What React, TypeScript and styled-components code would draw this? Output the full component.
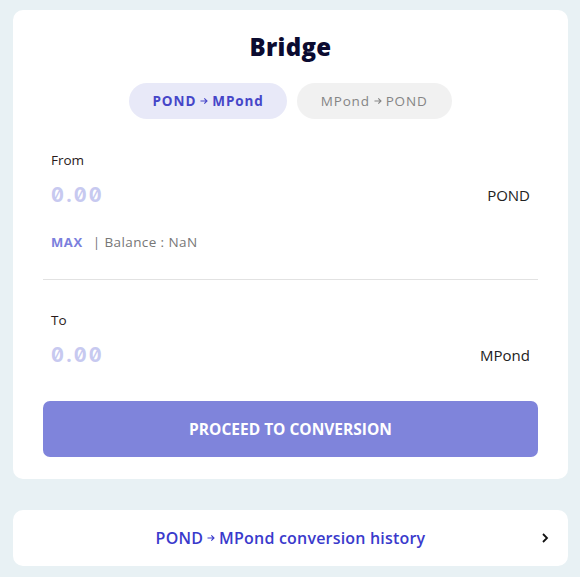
import styled, { createGlobalStyle } from "styled-components";

const GlobalStyle = createGlobalStyle`
  html, body {
    margin: 0;
    padding: 0;
    background: #e8f1f4;
    font-family: "Open Sans", "Noto Sans", sans-serif;
  }
  * { box-sizing: border-box; }
`;

const Page = styled.div`
  padding: 10px 12px 0 13px;
  display: flex;
  flex-direction: column;
  gap: 31px;
`;

const Card = styled.div`
  background: #fff;
  border-radius: 10px;
  padding: 22px 30px 22px 30px;
  display: flex;
  flex-direction: column;
  align-items: center;
`;

const Title = styled.h1`
  margin: 0;
  font-size: 24px;
  font-weight: 800;
  color: #0b0b30;
  line-height: 30px;
  letter-spacing: 0.3px;
`;

const Tabs = styled.div`
  display: flex;
  gap: 10px;
  margin-top: 21px;
`;

const Tab = styled.button<{ active?: boolean }>`
  border: none;
  height: 36px;
  border-radius: 18px;
  padding: 0 ${({ active }) => (active ? "23px" : "24px")};
  font-family: inherit;
  font-size: 13.5px;
  letter-spacing: ${({ active }) => (active ? "0.9px" : "0.8px")};
  font-weight: ${({ active }) => (active ? 700 : 500)};
  background: ${({ active }) => (active ? "#e8e9f8" : "#f1f1f1")};
  color: ${({ active }) => (active ? "#4646c8" : "#858585")};
  display: flex;
  align-items: center;
  gap: 4px;
`;

const Arrow = styled.svg`
  flex: none;
  width: 8px;
  height: 8px;
`;

function ArrowIcon() {
  return (
    <Arrow viewBox="0 0 8 8">
      <path
        d="M0.5 4h6.5M4.3 1.3L7 4 4.3 6.7"
        fill="none"
        stroke="currentColor"
        strokeWidth="1.1"
      />
    </Arrow>
  );
}

const Section = styled.div`
  align-self: stretch;
  padding: 0 8px;
  display: flex;
  flex-direction: column;
`;

const Label = styled.div`
  font-size: 13.5px;
  color: #2a1a1a;
  line-height: 18px;
`;

const AmountRow = styled.div`
  display: flex;
  justify-content: space-between;
  align-items: center;
  height: 34px;
`;

const Placeholder = styled.span`
  font-family: Inter, "DejaVu Sans", sans-serif;
  font-feature-settings: "zero" 1, "tnum" 1;
  font-size: 20px;
  font-weight: 700;
  color: #c7c9f0;
  letter-spacing: 2.2px;
`;

const Token = styled.span`
  font-size: 15px;
  color: #222;
`;

const BalanceRow = styled.div`
  display: flex;
  align-items: center;
  gap: 10px;
  font-size: 13.5px;
  letter-spacing: 0.4px;
  color: #777;
`;

const Max = styled.span`
  font-weight: 700;
  color: #7b80dd;
  font-size: 13px;
  letter-spacing: 0.6px;
`;

const Divider = styled.hr`
  align-self: stretch;
  border: none;
  border-top: 1px solid #e2e2e2;
  margin: 0;
`;

const ProceedButton = styled.button`
  align-self: stretch;
  height: 56px;
  border: none;
  border-radius: 7px;
  background: #7f84db;
  color: #fff;
  font-family: inherit;
  font-size: 15.5px;
  font-weight: 700;
  letter-spacing: 0;
`;

const HistoryCard = styled.div`
  background: #fff;
  border-radius: 10px;
  height: 56px;
  display: flex;
  align-items: center;
  justify-content: center;
  position: relative;
`;

const HistoryText = styled.span`
  font-size: 16px;
  font-weight: 600;
  color: #3a3acc;
  display: flex;
  align-items: center;
  gap: 4px;
  letter-spacing: 0.2px;
`;

const Chevron = styled.svg`
  position: absolute;
  right: 18px;
  top: 50%;
  transform: translateY(-50%);
`;

export default function App() {
  return (
    <>
      <GlobalStyle />
      <Page>
        <Card>
          <Title>Bridge</Title>
          <Tabs>
            <Tab active>
              POND <ArrowIcon /> MPond
            </Tab>
            <Tab>
              MPond <ArrowIcon /> POND
            </Tab>
          </Tabs>
          <Section style={{ marginTop: 32 }}>
            <Label>From</Label>
            <AmountRow style={{ marginTop: 9 }}>
              <Placeholder>0.00</Placeholder>
              <Token>POND</Token>
            </AmountRow>
            <BalanceRow style={{ marginTop: 21, marginBottom: 28 }}>
              <Max>MAX</Max>
              <span>| Balance : NaN</span>
            </BalanceRow>
          </Section>
          <Divider />
          <Section style={{ marginTop: 31 }}>
            <Label>To</Label>
            <AmountRow style={{ marginTop: 9 }}>
              <Placeholder>0.00</Placeholder>
              <Token>MPond</Token>
            </AmountRow>
          </Section>
          <ProceedButton style={{ marginTop: 29 }}>PROCEED TO CONVERSION</ProceedButton>
        </Card>
        <HistoryCard>
          <HistoryText>
            POND <ArrowIcon /> MPond conversion history
          </HistoryText>
          <Chevron width="10" height="14" viewBox="0 0 10 14">
            <path d="M3 3l4 4-4 4" fill="none" stroke="#111" strokeWidth="1.8" />
          </Chevron>
        </HistoryCard>
      </Page>
    </>
  );
}
